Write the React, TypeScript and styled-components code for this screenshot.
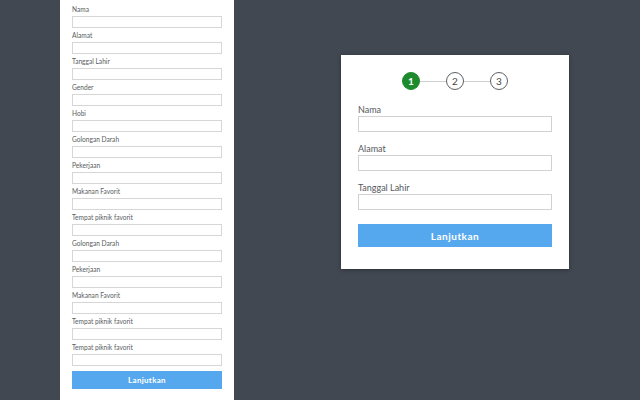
import React from 'react';
import styled, { createGlobalStyle } from 'styled-components';

const GlobalStyle = createGlobalStyle`
  html, body {
    margin: 0;
    padding: 0;
    height: 400px;
    overflow: hidden;
    background: #424852;
    font-family: Lato, 'Open Sans', sans-serif;
  }
  * {
    box-sizing: border-box;
  }
`;

const longFields = [
  'Nama',
  'Alamat',
  'Tanggal Lahir',
  'Gender',
  'Hobi',
  'Golongan Darah',
  'Pekerjaan',
  'Makanan Favorit',
  'Tempat piknik favorit',
  'Golongan Darah',
  'Pekerjaan',
  'Makanan Favorit',
  'Tempat piknik favorit',
  'Tempat piknik favorit',
];

const shortFields = ['Nama', 'Alamat', 'Tanggal Lahir'];

function App() {
  return (
    <Page>
      <GlobalStyle />
      <LongForm>
        {longFields.map((label, i) => (
          <SmallField key={i}>
            <SmallLabel>{label}</SmallLabel>
            <SmallInput />
          </SmallField>
        ))}
        <SmallButton>Lanjutkan</SmallButton>
      </LongForm>

      <Card>
        <Stepper>
          <Step $active>1</Step>
          <StepLine />
          <Step>2</Step>
          <StepLine />
          <Step>3</Step>
        </Stepper>
        {shortFields.map((label) => (
          <Field key={label}>
            <Label>{label}</Label>
            <Input />
          </Field>
        ))}
        <Button>Lanjutkan</Button>
      </Card>
    </Page>
  );
}

const Page = styled.div`
  display: flex;
  align-items: flex-start;
  gap: 107px;
  padding-left: 60px;
  height: 400px;
`;

const LongForm = styled.div`
  width: 174px;
  min-height: 420px;
  background: #ffffff;
  padding: 5px 12px 0 12px;
  display: flex;
  flex-direction: column;
`;

const SmallField = styled.div`
  display: flex;
  flex-direction: column;
  margin-bottom: 3px;
`;

const SmallLabel = styled.label`
  font-size: 6.6px;
  line-height: 9px;
  color: #585c60;
  margin-bottom: 2px;
`;

const SmallInput = styled.div`
  height: 12px;
  border: 1px solid #d6d6d6;
  background: #fff;
`;

const SmallButton = styled.div`
  margin-top: 2px;
  height: 18px;
  background: #55a8ee;
  color: #ffffff;
  font-size: 8px;
  font-weight: 700;
  display: flex;
  align-items: center;
  justify-content: center;
  letter-spacing: 0.3px;
`;

const Card = styled.div`
  margin-top: 55px;
  width: 228px;
  background: #ffffff;
  padding: 17px 17px 22px 17px;
  box-shadow: 0 1px 4px rgba(0, 0, 0, 0.35);
  display: flex;
  flex-direction: column;
`;

const Stepper = styled.div`
  display: flex;
  align-items: center;
  justify-content: center;
  margin-bottom: 14px;
`;

const Step = styled.div<{ $active?: boolean }>`
  width: 18px;
  height: 18px;
  border-radius: 50%;
  border: 1px solid ${(p) => (p.$active ? '#1e8a2e' : '#5c6064')};
  background: ${(p) => (p.$active ? '#1e8a2e' : '#ffffff')};
  color: ${(p) => (p.$active ? '#ffffff' : '#444444')};
  font-size: 10px;
  font-weight: ${(p) => (p.$active ? 700 : 400)};
  display: flex;
  align-items: center;
  justify-content: center;
`;

const StepLine = styled.div`
  width: 26px;
  height: 1px;
  background: #cfcfcf;
`;

const Field = styled.div`
  display: flex;
  flex-direction: column;
  margin-bottom: 11px;
`;

const Label = styled.label`
  font-size: 9px;
  line-height: 11px;
  color: #55595d;
  margin-bottom: 1px;
`;

const Input = styled.div`
  height: 16px;
  border: 1px solid #d2d2d2;
  background: #fff;
`;

const Button = styled.div`
  margin-top: 3px;
  height: 23px;
  background: #55a8ee;
  color: #ffffff;
  font-size: 10px;
  font-weight: 700;
  display: flex;
  align-items: center;
  justify-content: center;
  letter-spacing: 0.5px;
`;

export default App;
